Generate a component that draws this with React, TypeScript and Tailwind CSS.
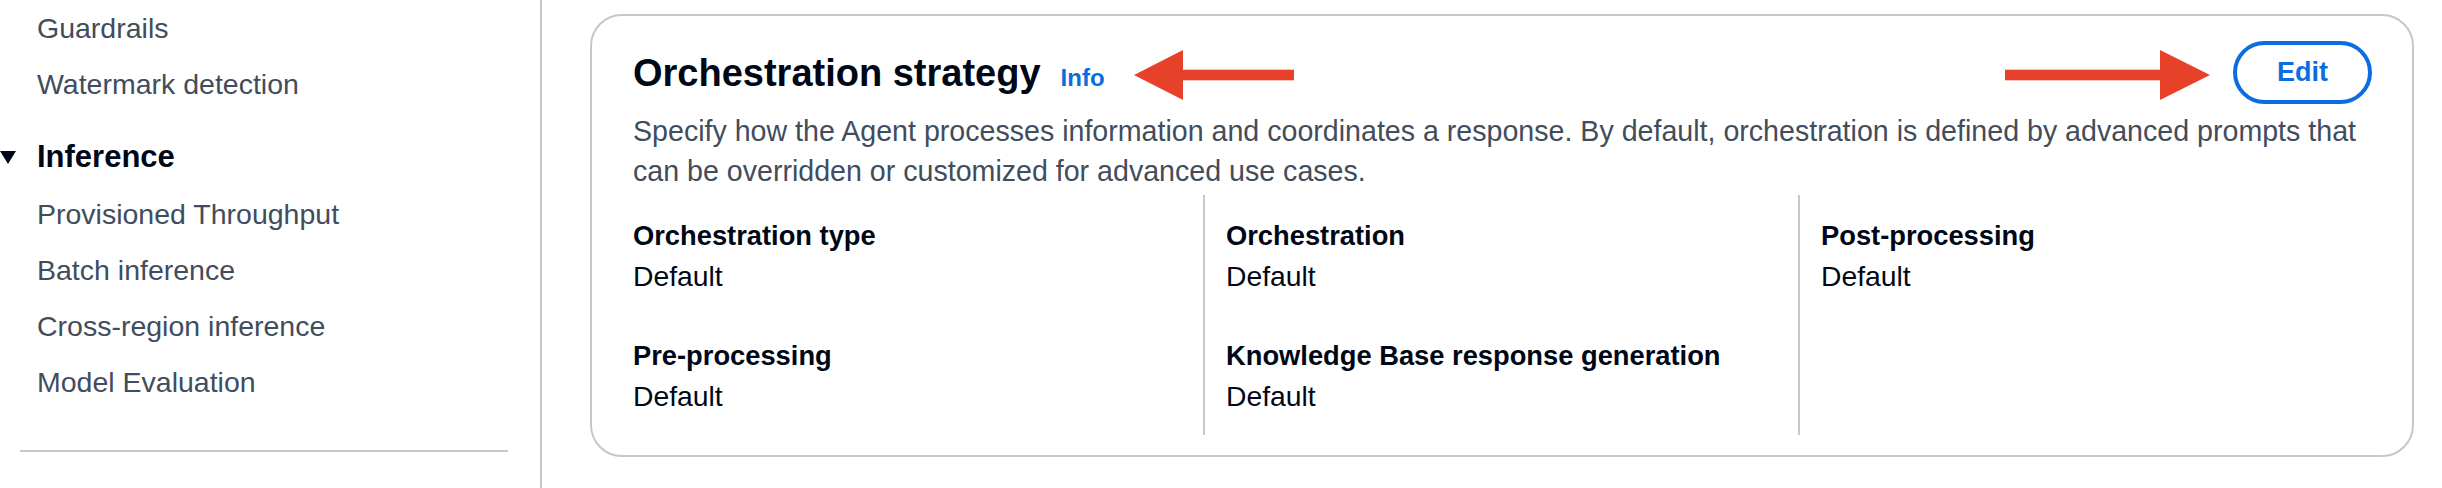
import React from "react";

const navTop = ["Guardrails", "Watermark detection"];
const navInference = [
  "Provisioned Throughput",
  "Batch inference",
  "Cross-region inference",
  "Model Evaluation",
];

type Item = { label: string; value: string };
const columns: Item[][] = [
  [
    { label: "Orchestration type", value: "Default" },
    { label: "Pre-processing", value: "Default" },
  ],
  [
    { label: "Orchestration", value: "Default" },
    { label: "Knowledge Base response generation", value: "Default" },
  ],
  [{ label: "Post-processing", value: "Default" }],
];

function NavItem({ children }: { children: React.ReactNode }) {
  return (
    <div className="pl-[37px] py-[8px] leading-[40px] text-[28.5px] text-[#414d5c] whitespace-nowrap">
      {children}
    </div>
  );
}

function KeyValue({ label, value }: Item) {
  return (
    <div>
      <div className="text-[27.3px] font-bold leading-[40px] text-[#000716] whitespace-nowrap">
        {label}
      </div>
      <div className="text-[28.3px] leading-[40px] text-[#000716]">{value}</div>
    </div>
  );
}

export default function App() {
  return (
    <div className="relative flex w-[2442px] h-[488px] overflow-hidden bg-white font-['Liberation_Sans',Arial,sans-serif]">
      {/* Side navigation */}
      <aside className="w-[542px] shrink-0 border-r-2 border-[#c6c6cd] flex flex-col">
        {navTop.map((t) => (
          <NavItem key={t}>{t}</NavItem>
        ))}
        <div className="mt-[17px] mb-[1px] py-[8px] flex items-center">
          <svg width="16" height="13" viewBox="0 0 16 13" className="shrink-0">
            <polygon points="0,0 16,0 8,13" fill="#000716" />
          </svg>
          <span className="ml-[21px] text-[31px] font-bold leading-[40px] text-[#000716]">
            Inference
          </span>
        </div>
        {navInference.map((t) => (
          <NavItem key={t}>{t}</NavItem>
        ))}
        <div className="mt-[40px] ml-[20px] mr-[32px] h-[2px] bg-[#c6c6cd]" />
      </aside>

      {/* Main content */}
      <main className="flex-1 pl-[48px] pr-[28px] pt-[14px]">
        <section className="border-2 border-[#c6c6cd] rounded-[32px] pl-[41px] pr-[40px] pt-[22px] pb-[20px]">
          <div className="flex items-start justify-between">
            <div className="flex items-baseline mt-[13px]">
              <h2 className="text-[38px] font-bold leading-[44px] text-[#000716] whitespace-nowrap">
                Orchestration strategy
              </h2>
              <span className="ml-[20px] text-[24px] font-bold text-[#0b6de0]">Info</span>
            </div>
            <button className="mt-[3px] h-[63px] px-[40px] border-4 border-[#0b6de0] rounded-full text-[27px] font-bold leading-none text-[#0b6de0] flex items-center bg-white">
              Edit
            </button>
          </div>
          <p className="mt-[7px] text-[28.6px] leading-[40px] text-[#414d5c]">
            Specify how the Agent processes information and coordinates a response. By default,
            orchestration is defined by advanced prompts that
            <br />
            can be overridden or customized for advanced use cases.
          </p>
          <div className="mt-[4px] -ml-[25px] -mr-[21px] grid grid-cols-3">
            {columns.map((col, i) => (
              <div
                key={i}
                className={
                  i === 0
                    ? "pl-[25px] pt-[21px] pb-[19px] flex flex-col gap-[40px]"
                    : "pl-[21px] pt-[21px] pb-[19px] border-l-2 border-[#c6c6cd] flex flex-col gap-[40px]"
                }
              >
                {col.map((it) => (
                  <KeyValue key={it.label} label={it.label} value={it.value} />
                ))}
              </div>
            ))}
          </div>
        </section>
      </main>

      {/* Annotation arrows */}
      <svg
        className="absolute left-[1134px] top-[50px]"
        width="160"
        height="50"
        viewBox="0 0 160 50"
      >
        <polygon points="0,25 49,0 49,50" fill="#e8412a" />
        <rect x="48" y="19.7" width="112" height="10.6" fill="#e8412a" />
      </svg>
      <svg
        className="absolute left-[2005px] top-[50px]"
        width="205"
        height="50"
        viewBox="0 0 205 50"
      >
        <rect x="0" y="19.7" width="157" height="10.6" fill="#e8412a" />
        <polygon points="155,0 205,25 155,50" fill="#e8412a" />
      </svg>
    </div>
  );
}
